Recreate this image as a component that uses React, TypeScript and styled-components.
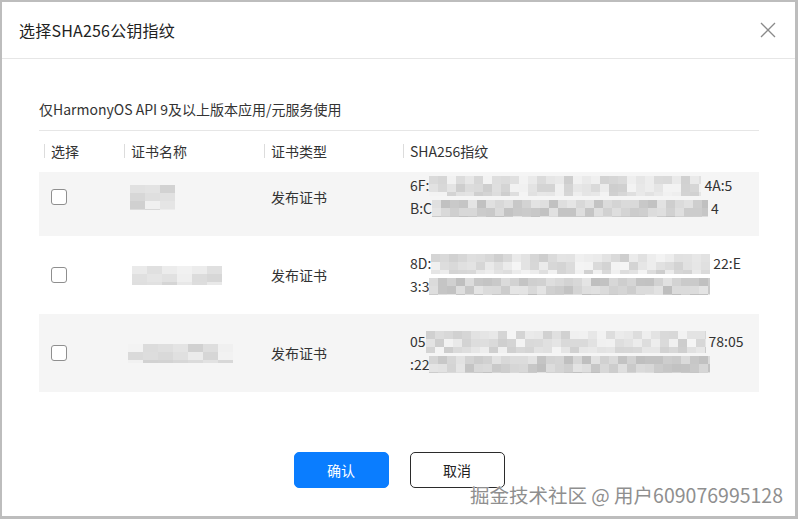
import React, { useEffect, useRef } from 'react'
import styled, { createGlobalStyle } from 'styled-components'

const GlobalStyle = createGlobalStyle`
  html, body {
    margin: 0;
    padding: 0;
    background: #bdbdbd;
  }
  body {
    font-family: "Noto Sans CJK SC", "Noto Sans", sans-serif;
    color: #333;
  }
`

const Frame = styled.div`
  width: 798px;
  height: 519px;
  box-sizing: border-box;
  padding: 2px 3px 3px 2px;
  background: #bdbdbd;
`

const Dialog = styled.div`
  position: relative;
  height: 100%;
  background: #fff;
  display: flex;
  flex-direction: column;
`

const Header = styled.div`
  height: 56px;
  display: flex;
  align-items: center;
  justify-content: space-between;
  padding: 0 17px;
  border-bottom: 1px solid #e6e6e6;
`

const Title = styled.div`
  font-size: 16px;
  color: #222;
  line-height: 22px;
  letter-spacing: 0.2px;
`

const CloseBtn = styled.button`
  width: 20px;
  height: 20px;
  border: 0;
  background: none;
  padding: 0;
  display: flex;
  align-items: center;
  justify-content: center;
  cursor: pointer;
`

const Body = styled.div`
  padding: 40px 36px 0 37px;
`

const Subtitle = styled.div`
  font-size: 14px;
  line-height: 20px;
  color: #333;
  padding-bottom: 11px;
  border-bottom: 1px solid #e6e6e6;
`

const cols = '80px 140px 139px 1fr'

const HeadRow = styled.div`
  display: grid;
  grid-template-columns: ${cols};
  height: 40px;
  align-items: center;
`

const HeadCell = styled.div`
  position: relative;
  padding-left: 12px;
  font-size: 14px;
  color: #333;

  &::before {
    content: '';
    position: absolute;
    left: 5px;
    top: 3px;
    width: 1px;
    height: 14px;
    background: #dcdcdc;
  }
`

const Scroller = styled.div`
  margin-top: 1px;
  height: 220px;
  overflow: hidden;
`

const Row = styled.div<{ $striped: boolean }>`
  display: grid;
  grid-template-columns: ${cols};
  height: 78px;
  align-items: center;
  background: ${({ $striped }) => ($striped ? '#f5f5f5' : '#fff')};
`

const Cell = styled.div<{ $indent?: number }>`
  padding-left: ${({ $indent }) => $indent ?? 12}px;
  font-size: 14px;
  color: #333;
  display: flex;
  align-items: center;
`

const Check = styled.input.attrs({ type: 'checkbox' })`
  appearance: none;
  margin: 0;
  width: 16px;
  height: 16px;
  box-sizing: border-box;
  border: 1px solid #8f8f8f;
  border-radius: 3px;
  background: #fff;
`

const ShaCell = styled.div`
  padding-left: 12px;
  font-size: 14px;
  line-height: 23px;
  color: #333;
`

const ShaLine = styled.div`
  display: flex;
  align-items: center;
  height: 23px;
  white-space: nowrap;
`

const Tail = styled.span`
  padding-left: 3px;
`

const Footer = styled.div`
  display: flex;
  justify-content: center;
  gap: 21px;
  margin-top: 60px;
`

const Button = styled.button<{ $primary?: boolean }>`
  width: 95px;
  height: 36px;
  box-sizing: border-box;
  border-radius: 5px;
  font-family: inherit;
  font-size: 14px;
  cursor: pointer;
  border: 1px solid ${({ $primary }) => ($primary ? '#0a7dff' : '#2b2b2b')};
  background: ${({ $primary }) => ($primary ? '#0a7dff' : '#fff')};
  color: ${({ $primary }) => ($primary ? '#fff' : '#222')};
`

const Watermark = styled.div`
  position: absolute;
  right: 12px;
  bottom: 8px;
  font-size: 19.5px;
  line-height: 26px;
  color: #8f8f8f;
  text-shadow: 0 0 2px #fff, 0 0 1px #fff;
  pointer-events: none;
  white-space: nowrap;
`

// pixelated blur, drawn as a grid of grey tiles
const Mosaic: React.FC<{ w: number; h: number; seed: number; cell?: number; light?: boolean }> = ({
  w,
  h,
  seed,
  cell = 9,
  light,
}) => {
  let s = seed
  const rnd = () => {
    s = (s * 9301 + 49297) % 233280
    return s / 233280
  }
  const rects = []
  const rowsN = Math.ceil(h / 8)
  const colsN = Math.ceil(w / cell)
  for (let r = 0; r < rowsN; r++) {
    for (let c = 0; c < colsN; c++) {
      const base = light ? 205 : 190
      const v = Math.round(base + rnd() * 40)
      rects.push(
        <rect key={`${r}-${c}`} x={c * cell} y={r * 8} width={cell} height={8} fill={`rgb(${v},${v},${v})`} />
      )
    }
  }
  return (
    <svg width={w} height={h} viewBox={`0 0 ${w} ${h}`} style={{ display: 'block', flex: 'none' }}>
      {rects}
    </svg>
  )
}

type Line = { pre: string; blur: number; post: string; h: number }
type Cert = { name: [number, number]; indent: number; lines: [Line, Line] }

const certs: Cert[] = [
  {
    name: [45, 25],
    indent: 11,
    lines: [
      { pre: '6F:', blur: 272, post: '4A:5', h: 20 },
      { pre: 'B:C', blur: 276, post: '4', h: 17 },
    ],
  },
  {
    name: [90, 19],
    indent: 13,
    lines: [
      { pre: '8D:', blur: 279, post: '22:E', h: 20 },
      { pre: '3:3', blur: 281, post: '', h: 17 },
    ],
  },
  {
    name: [105, 19],
    indent: 9,
    lines: [
      { pre: '05', blur: 280, post: '78:05', h: 22 },
      { pre: ':22', blur: 281, post: '', h: 17 },
    ],
  },
]

const CloseIcon = () => (
  <svg width="16" height="16" viewBox="0 0 16 16">
    <path d="M1 1 L15 15 M15 1 L1 15" stroke="#8a8a8a" strokeWidth="1.3" fill="none" />
  </svg>
)

const App: React.FC = () => {
  const scrollRef = useRef<HTMLDivElement>(null)

  useEffect(() => {
    if (scrollRef.current) scrollRef.current.scrollTop = 14
  }, [])

  return (
    <Frame>
      <GlobalStyle />
      <Dialog>
        <Header>
          <Title>选择SHA256公钥指纹</Title>
          <CloseBtn aria-label="close">
            <CloseIcon />
          </CloseBtn>
        </Header>
        <Body>
          <Subtitle>仅HarmonyOS API 9及以上版本应用/元服务使用</Subtitle>
          <HeadRow>
            <HeadCell>选择</HeadCell>
            <HeadCell>证书名称</HeadCell>
            <HeadCell>证书类型</HeadCell>
            <HeadCell>SHA256指纹</HeadCell>
          </HeadRow>
          <Scroller ref={scrollRef}>
            {certs.map((c, i) => (
              <Row key={i} $striped={i % 2 === 0}>
                <Cell>
                  <Check />
                </Cell>
                <Cell $indent={c.indent}>
                  <Mosaic w={c.name[0]} h={c.name[1]} seed={i * 31 + 7} cell={15} light />
                </Cell>
                <Cell>发布证书</Cell>
                <ShaCell>
                  {c.lines.map((l, j) => (
                    <ShaLine key={j}>
                      <span>{l.pre}</span>
                      <Mosaic w={l.blur} h={l.h} seed={i * 97 + j * 13 + 3} light={j === 0} />
                      <Tail>{l.post}</Tail>
                    </ShaLine>
                  ))}
                </ShaCell>
              </Row>
            ))}
          </Scroller>
          <Footer>
            <Button $primary>确认</Button>
            <Button>取消</Button>
          </Footer>
        </Body>
        <Watermark>掘金技术社区 @ 用户609076995128</Watermark>
      </Dialog>
    </Frame>
  )
}

export default App
